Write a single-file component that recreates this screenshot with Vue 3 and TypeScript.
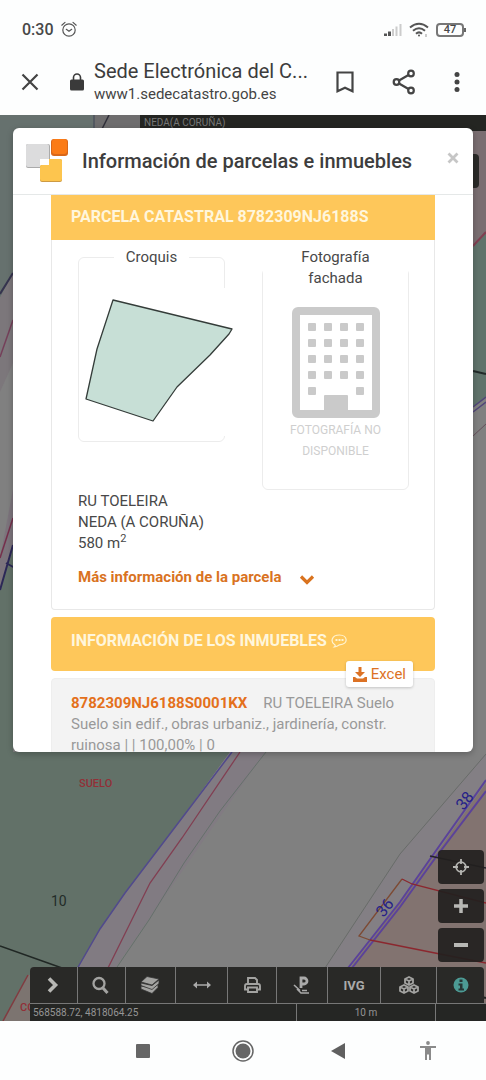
<script setup lang="ts">
interface Tool {
  id: string
  label: string
}

const tools: Tool[] = [
  { id: 'next', label: 'Desplegar' },
  { id: 'search', label: 'Buscar' },
  { id: 'layers', label: 'Capas' },
  { id: 'measure', label: 'Medir' },
  { id: 'print', label: 'Imprimir' },
  { id: 'ponencia', label: 'Ponencias' },
  { id: 'ivg', label: 'IVG' },
  { id: 'cubes', label: 'Edificios 3D' },
  { id: 'info', label: 'Información' },
]

const windows: { x: number; y: number }[] = []
for (let row = 0; row < 5; row++) {
  for (let col = 0; col < 4; col++) {
    if (row === 4 && (col === 1 || col === 2)) continue
    windows.push({ x: 16 + col * 16, y: 16 + row * 16 })
  }
}
</script>

<template>
  <div class="phone">
    <header class="chrome">
      <div class="status">
        <span class="clock">0:30</span>
        <svg class="alarm" width="18" height="18" viewBox="0 0 18 18" fill="none" stroke="#555" stroke-width="1.2" stroke-linecap="round">
          <circle cx="9" cy="9" r="6.2" />
          <path d="M1.800 4.200 5 1.400M16.200 4.200 13 1.400M6.300 8.300 9 10.300l2.700-2" />
        </svg>
        <span class="spacer"></span>
        <svg width="20" height="14" viewBox="0 0 20 14">
          <path d="M1 10.500h3V13H1zM5 8.500h3V13H5z" fill="#555" />
          <path d="M9 6h2v7H9zM12.500 3.500h2V13h-2zM16.500 1h2v12h-2z" fill="#ccc" />
        </svg>
        <svg class="wifi" width="20" height="16" viewBox="0 0 20 16" fill="none" stroke="#555" stroke-width="2">
          <path d="M1 5.500Q10-2 19 5.500M4 8.800Q10 3.600 16 8.800M7 11.800Q10 9 13 11.800" />
          <circle cx="10" cy="13.500" r="1" fill="#555" stroke="none" />
          <path d="M17 12v3" stroke="#999" stroke-width="1" />
        </svg>
        <span class="battery">47</span>
      </div>
      <div class="toolbar">
        <button class="plain" aria-label="Cerrar pestaña">
          <svg width="18" height="18" viewBox="0 0 18 18"><path d="m1.500 1.500 15 15m0-15-15 15" stroke="#444" stroke-width="2.200" /></svg>
        </button>
        <svg class="lock" width="14" height="18" viewBox="0 0 14 18">
          <rect x="0" y="6.500" width="14" height="11" rx="1.500" fill="#3a3a3a" />
          <path d="M3.500 7V4.500a3.500 3.500 0 0 1 7 0V7" fill="none" stroke="#3a3a3a" stroke-width="1.600" />
        </svg>
        <div class="site">
          <div class="site-name">Sede Electrónica del C...</div>
          <div class="site-url">www1.sedecatastro.gob.es</div>
        </div>
        <button class="plain" aria-label="Guardar">
          <svg width="18" height="22" viewBox="0 0 18 22"><path d="M1.500 1.500h15v18.700L9 16.800l-7.500 3.400z" fill="none" stroke="#444" stroke-width="2.200" /></svg>
        </button>
        <button class="plain share" aria-label="Compartir">
          <svg width="24" height="26" viewBox="0 0 24 26" fill="none" stroke="#444" stroke-width="2.200">
            <circle cx="4.500" cy="13" r="2.800" /><circle cx="19" cy="4.500" r="2.800" /><circle cx="19" cy="21.500" r="2.800" />
            <path d="m7 11.500 9.500-5.500M7 14.500l9.500 5.500" />
          </svg>
        </button>
        <button class="plain" aria-label="Más opciones">
          <svg width="6" height="20" viewBox="0 0 6 20" fill="#444"><circle cx="3" cy="2.500" r="2.500" /><circle cx="3" cy="10" r="2.500" /><circle cx="3" cy="17.500" r="2.500" /></svg>
        </button>
      </div>
    </header>

    <main class="map">
      <svg class="map-canvas" viewBox="0 115 486 906" preserveAspectRatio="xMidYMid slice" fill="none">
        <rect y="115" width="486" height="906" fill="#808080" />
        <path d="M0 115h95v100L13 273 0 298z" fill="#66716e" />
        <path d="M95 115h46v15H95z" fill="#6e6d6e" />
        <path d="M94 115v14" stroke="#414354" /><path d="m109 115-7 14" stroke="#30303a" stroke-width="1.500" />
        <path d="M0 298 13 273v90L0 392z" fill="#7c777b" />
        <path d="m13 273-13 21" stroke="#35334e" stroke-width="2" />
        <path d="M13 320 0 357" stroke="#75405a" stroke-width="1.500" />
        <path d="M0 558v30l13-44v-55z" fill="#7c747c" />
        <path d="M13 518 0 558" stroke="#75304c" stroke-width="1.500" />
        <path d="M0 590 13 545V752H230L182 818 125 893 100 929 77 969 40 1021H0z" fill="#627168" />
        <path d="M13 545 0 590M6 563l9 5" stroke="#2c2857" stroke-width="2" />
        <path d="M473 130h13v102l-13 14z" fill="#7a6e71" />
        <path d="M473 246 486 232v165l-13 10z" fill="#60736b" />
        <path d="m473 246 13-14" stroke="#813f51" stroke-width="2" />
        <path d="m473 371 13 3" stroke="#222a29" stroke-width="2" />
        <path d="m473 407 13-10M473 412l13-10" stroke="#514679" stroke-width="1.500" />
        <path d="m473 436 13-12" stroke="#664f5b" />
        <path d="M230 752h35L115 968l-31 53H40L77 969l23-40 25-36 57-75z" fill="#817b82" />
        <path d="m28 975-25 46h40l34-52z" fill="#7c7470" />
        <path d="m232 752-50 66-57 75-25 36-23 40-30 52" stroke="#514a8c" stroke-width="1.500" />
        <path d="m240 752-58 86-32 45-43 87-18 51" stroke="#813f52" stroke-width="1.300" />
        <path d="M266 752 220 811l-36 52-35 57-34 50" stroke="#65706b" />
        <path d="m486 754-86 100-75 114-31 53h15l41-53 50-67 40-57 46-64z" fill="#837f84" />
        <path d="m486 754-86 100-75 114" stroke="#686c69" />
        <path d="M486 783 440 848l-40 55-50 65-41 53h177z" fill="#827370" />
        <path d="m486 780-46 65-40 57-52 66-40 53M486 791l-50 66-36 50-48 61" stroke="#5b429a" stroke-width="2" />
        <path d="m430 856 56 12" stroke="#24212a" stroke-width="1.500" />
        <path d="m402 879-43 57 11 4" stroke="#7d4a33" stroke-width="1.300" />
        <path d="m370 940 70 14 46 9M402 879l10 5 74 19" stroke="#8b272e" stroke-width="1.300" />
        <path d="m0 946 62 22 20 9" stroke="#202724" stroke-width="1.500" />
        <path d="m28 975-25 46" stroke="#813b40" stroke-width="1.500" />
        <path d="M360 968 486 998" stroke="#222" stroke-width="2" />
        <text x="79" y="787" class="map-red">SUELO</text>
        <text x="51" y="906" class="map-black">10</text>
        <text x="20" y="1011" class="map-red">CO</text>
        <text class="map-blue" transform="translate(469 804) rotate(-52)">38</text>
        <text class="map-blue" transform="translate(389 911) rotate(-52)">36</text>
      </svg>
      <div class="place">NEDA(A CORUÑA)</div>
      <div class="side-tab"></div>

      <section class="modal" role="dialog" aria-labelledby="modal-title">
        <header class="modal-head">
          <svg width="44" height="44" viewBox="0 0 44 44">
            <rect x="1" y="5" width="24" height="24" rx="2" fill="#aaa" /><rect x="1" y="5" width="23" height="23" rx="2" fill="#dcdcdd" />
            <path d="M15 20h9v7h-9z" fill="#fff" />
            <path d="M17 26h7v-6h11q2 0 2 2v19q0 2-2 2H17q-2 0-2-2V28q0-2 2-2z" fill="#cd9a43" />
            <path d="M17 26h7v-6h11q2 0 2 2v18q0 2-2 2H17q-2 0-2-2V28q0-2 2-2z" fill="#fdc54e" />
            <rect x="26" y="0" width="17" height="17" rx="3" fill="#d96718" /><rect x="27" y="0" width="15" height="15" rx="3" fill="#fb7b16" />
          </svg>
          <h1 id="modal-title">Información de parcelas e inmuebles</h1>
          <button class="plain close" aria-label="Cerrar">
            <svg width="12" height="12" viewBox="0 0 12 12"><path d="m1.500 1.500 9 9m0-9-9 9" stroke="#c6c6c6" stroke-width="2.800" /></svg>
          </button>
        </header>

        <div class="modal-body">
          <article class="parcel">
            <h2 class="band">PARCELA CATASTRAL 8782309NJ6188S</h2>
            <div class="parcel-body">
              <div class="pictures">
                <fieldset class="frame sketch">
                  <legend>Croquis</legend>
                  <svg width="162" height="148" viewBox="79 288 162 148">
                    <path d="M81 288h160v148H81z" fill="#fff" />
                    <path d="m113 300 119 29-3 5-19 21-33 32-24 34-67-22 11-50z" fill="#c7dfd6" stroke="#343c39" stroke-width="1.300" stroke-linejoin="round" />
                  </svg>
                </fieldset>
                <fieldset class="frame photo">
                  <legend>Fotografía fachada</legend>
                  <svg width="88" height="112" viewBox="0 0 88 112">
                    <rect x="4" y="4" width="80" height="103" rx="2" fill="#fff" stroke="#cacaca" stroke-width="8" />
                    <rect v-for="(w, i) in windows" :key="i" :x="w.x" :y="w.y" width="8" height="8" rx="1" fill="#cacaca" />
                    <rect x="32" y="88" width="24" height="20" rx="1" fill="#cacaca" />
                  </svg>
                  <p>FOTOGRAFÍA NO DISPONIBLE</p>
                </fieldset>
              </div>
              <address>RU TOELEIRA<br />NEDA (A CORUÑA)<br />580 m<sup>2</sup></address>
              <a class="details" href="#parcela">
                Más información de la parcela
                <svg width="16" height="12" viewBox="0 0 16 12"><path d="m2 2.500 6 6 6-6" fill="none" stroke="#d9731f" stroke-width="3.200" /></svg>
              </a>
            </div>
          </article>

          <div class="estates-band">
            <h2 class="band">
              INFORMACIÓN DE LOS INMUEBLES
              <svg width="17" height="14" viewBox="0 0 17 14" fill="none" stroke="#fff3d0" stroke-width="1.200">
                <path d="M3.500 10.500C-.5 8 .3 1 8.500 1s9.500 9.500 0 9.800q-2.500 2-5 2 1.500-1 0-2.300z" />
                <path d="M4.500 6h2m1 0h2m1 0h2" stroke-width="1.800" />
              </svg>
            </h2>
            <button class="excel">
              <svg width="14" height="15" viewBox="0 0 14 15" fill="#dc7225"><path d="M5.500 0h3v5H12L7 10 2 5h3.500zM0 10h2l2 1.500h6l2-1.500h2v5H0z" /></svg>
              Excel
            </button>
          </div>

          <article class="estate">
            <a href="#inmueble">8782309NJ6188S0001KX</a>
            <span>RU TOELEIRA Suelo</span><br />
            Suelo sin edif., obras urbaniz., jardinería, constr. ruinosa | | 100,00% | 0
          </article>
        </div>
      </section>

      <div class="zoom-tools">
        <button class="dark" aria-label="Mi posición">
          <svg width="16" height="16" viewBox="0 0 16 16" fill="none" stroke="#b5b5b2" stroke-width="1.800"><circle cx="8" cy="8" r="4.800" /><path d="M8 0v5M8 11v5M0 8h5M11 8h5" /></svg>
        </button>
        <button class="dark" aria-label="Acercar">
          <svg width="14" height="14" viewBox="0 0 14 14"><path d="M7 0v14M0 7h14" stroke="#b8b8b5" stroke-width="3.500" /></svg>
        </button>
        <button class="dark" aria-label="Alejar">
          <svg width="14" height="14" viewBox="0 0 14 14"><path d="M0 7h14" stroke="#b8b8b5" stroke-width="4" /></svg>
        </button>
      </div>

      <footer class="map-foot">
        <nav class="tools">
          <button v-for="tool in tools" :key="tool.id" :aria-label="tool.label">
            <svg v-if="tool.id === 'next'" width="14" height="18" viewBox="0 0 14 18"><path d="m3 2.500 6.500 6.500L3 15.500" fill="none" stroke="#b8b8b5" stroke-width="3.600" /></svg>
            <svg v-else-if="tool.id === 'search'" width="18" height="18" viewBox="0 0 18 18" fill="none" stroke="#a3a3a1"><circle cx="7" cy="7.500" r="5.500" stroke-width="2.300" /><path d="m11 12 4.500 5" stroke-width="3" /></svg>
            <svg v-else-if="tool.id === 'layers'" width="20" height="18" viewBox="0 0 20 18" fill="#a3a3a1" stroke="#333" stroke-width="0.800">
              <path d="m1 13 11 4.500 6-6v-3L12 12 1 10z" /><path d="m1 9.500 11 4 7-6V4l-7 5.500L1 7z" /><path d="m1 6 6-5.500L19 3l-7 6z" />
            </svg>
            <svg v-else-if="tool.id === 'measure'" width="18" height="10" viewBox="0 0 18 10"><path d="M4 5h10" stroke="#aaa" stroke-width="1.600" /><path d="m0 5 4-3.500v7zM18 5l-4-3.500v7z" fill="#aaa" /></svg>
            <svg v-else-if="tool.id === 'print'" width="17" height="16" viewBox="0 0 17 16" fill="none" stroke="#a3a3a1" stroke-width="1.900"><path d="M4 7V1h7l2 2v4M3.500 12.500H1V9q0-2 2-2h11q2 0 2 2v3.500h-2.500" /><path d="M4 10.500h9V15H4z" /></svg>
            <svg v-else-if="tool.id === 'ponencia'" width="18" height="20" viewBox="0 0 18 20" fill="none" stroke="#aaa"><path d="M8 13V3h3a3 3 0 0 1 0 6H8" stroke-width="2.800" /><path d="M1 10l6 5.500M4 14l4 4h8M9 15.500h5" stroke-width="1.600" /></svg>
            <span v-else-if="tool.id === 'ivg'">IVG</span>
            <svg v-else-if="tool.id === 'cubes'" width="22" height="18" viewBox="0 0 22 18" fill="none" stroke="#a3a3a1" stroke-width="1.800" stroke-linejoin="round">
              <path d="m11 1 4 2v4l-4 2-4-2V3zM7 3l4 2 4-2M11 5v4" /><path d="m6 9 4 2v4l-4 2-4-2v-4zM2 11l4 2 4-2M6 13v4" /><path d="m16 9 4 2v4l-4 2-4-2v-4zM12 11l4 2 4-2M16 13v4" />
            </svg>
            <svg v-else width="16" height="16" viewBox="0 0 16 16"><circle cx="8" cy="8" r="7.500" fill="#4c9a94" /><path d="M6.500 2.500h3v2.500h-3zM5.500 6.500h4v5h1.500v2h-5.500v-2h1.500v-3H5.500z" fill="#263534" /></svg>
          </button>
        </nav>
        <div class="readout">
          <span>568588.72, 4818064.25</span>
          <span class="scale">10 m</span>
          <span></span>
        </div>
      </footer>
    </main>

    <nav class="system">
      <button class="plain" aria-label="Recientes"><svg width="14" height="14" viewBox="0 0 14 14"><rect width="14" height="14" rx="1" fill="#666" /></svg></button>
      <button class="plain" aria-label="Inicio"><svg width="22" height="22" viewBox="0 0 22 22"><circle cx="11" cy="11" r="10" fill="none" stroke="#666" stroke-width="1.500" /><circle cx="11" cy="11" r="7.500" fill="#666" /></svg></button>
      <button class="plain" aria-label="Atrás"><svg width="14" height="16" viewBox="0 0 14 16"><path d="M0 8 14 0v16z" fill="#606060" /></svg></button>
      <button class="plain" aria-label="Accesibilidad"><svg width="16" height="20" viewBox="0 0 16 20" fill="#8a8a8a"><circle cx="8" cy="2" r="1.900" /><path d="M0 5h16v2h-5v12H9v-5.500H7V19H5V7H0z" /></svg></button>
    </nav>
  </div>
</template>

<style>
body {
  margin: 0;
}
</style>

<style scoped>
.phone {
  display: flex;
  flex-direction: column;
  min-height: 100vh;
  background: #fdfefe;
  color: #484848;
  font: 15px/21px Roboto, "Liberation Sans", sans-serif;
}
.phone * {
  box-sizing: border-box;
}
svg {
  display: block;
  flex: none;
}
button {
  font: inherit;
  color: inherit;
  cursor: pointer;
}
.plain {
  display: flex;
  padding: 0;
  border: 0;
  background: none;
}
.chrome {
  height: 115px;
}
.status {
  display: flex;
  align-items: center;
  padding: 19px 22px 0 22px;
}
.clock {
  font-size: 16px;
  font-weight: 500;
}
.alarm {
  margin-left: 6px;
}
.spacer {
  flex: 1;
}
.wifi {
  margin: 0 7px 0 6px;
}
.battery {
  position: relative;
  width: 28px;
  height: 14px;
  border: 2px solid #777;
  border-radius: 4px;
  font-size: 11px;
  font-weight: 500;
  line-height: 10px;
  text-align: center;
}
.battery::after {
  content: "";
  position: absolute;
  top: 3px;
  right: -4px;
  width: 2px;
  height: 4px;
  background: #666;
}
.toolbar {
  display: flex;
  align-items: center;
  padding: 19px 26px 0 21px;
}
.lock {
  margin: 0 10px 0 31px;
}
.site {
  flex: 1;
  min-width: 0;
  white-space: nowrap;
}
.site-name {
  color: #3c3c3c;
  font-size: 20px;
  line-height: 24px;
}
.site-url {
  color: #444;
  line-height: 22px;
}
.share {
  margin: 0 38px;
}

.map {
  position: relative;
  display: flex;
  flex: 1;
  flex-direction: column;
  justify-content: flex-end;
  overflow: hidden;
}
.map-canvas {
  position: absolute;
  inset: 0;
  width: 100%;
  height: 100%;
}
.map-red {
  fill: #922f37;
  font-size: 11px;
  font-weight: 500;
}
.map-black {
  fill: #222c28;
  font-size: 14px;
}
.map-blue {
  fill: #252188;
  font-size: 16px;
  text-anchor: middle;
}
.place {
  position: absolute;
  top: 0;
  right: 0;
  left: 140px;
  height: 16px;
  padding-left: 4px;
  background: #242522;
  color: #777;
  font-size: 10px;
  line-height: 15px;
}
.side-tab {
  position: absolute;
  top: 39px;
  right: 7px;
  width: 20px;
  height: 34px;
  border-radius: 4px;
  background: #2a2a28;
}
.modal {
  position: absolute;
  inset: 13px 13px 269px;
  display: flex;
  flex-direction: column;
  overflow: hidden;
  border-radius: 6px;
  background: #fff;
  box-shadow: 0 2px 6px rgba(0, 0, 0, 0.25);
}
.modal-head {
  display: flex;
  flex: none;
  align-items: center;
  height: 67px;
  padding: 0 14px 0 12px;
  border-bottom: 1px solid #e5e8e8;
}
h1 {
  flex: 1;
  margin: 0 0 0 13px;
  color: #3d3d3d;
  font-size: 20px;
  font-weight: 500;
  line-height: 24px;
  white-space: nowrap;
}
.close {
  margin-top: -6px;
}
.modal-body {
  flex: 1;
  min-height: 0;
  padding: 0 38px;
  overflow-y: auto;
  scrollbar-width: none;
}
.parcel {
  border: 1px solid #e8e8e8;
  border-top: 0;
  border-radius: 0 0 4px 4px;
}
.band {
  display: flex;
  align-items: center;
  gap: 4px;
  margin: 0 -1px;
  padding: 11px 20px 13px;
  background: #fec75a;
  color: #fff6dc;
  font-size: 16px;
  font-weight: 700;
  line-height: 21px;
  white-space: nowrap;
}
.parcel-body {
  padding: 7px 25px 21px 26px;
}
.pictures {
  display: grid;
  grid-template-columns: 1fr 1fr;
  align-items: start;
  gap: 37px;
}
.frame {
  min-width: 0;
  margin: 0;
  padding: 0;
  border: 1px solid #ececec;
  border-radius: 6px;
}
legend {
  margin: 0 auto;
  padding: 0 12px;
  text-align: center;
}
.sketch {
  height: 195px;
}
.sketch svg {
  margin-top: 20px;
}
.photo {
  height: 243px;
}
.photo legend {
  padding: 0 28px;
}
.photo svg {
  margin: 18px auto 0;
}
.photo p {
  margin: 1px 20px 0;
  color: #cfcfcf;
  font-size: 12px;
  text-align: center;
}
address {
  margin-top: 1px;
  font-style: normal;
}
sup {
  font-size: 11px;
  line-height: 0;
}
.details {
  display: flex;
  align-items: center;
  gap: 18px;
  margin-top: 13px;
  color: #d9731f;
  font-weight: 700;
  text-decoration: none;
}
.details svg {
  margin-top: 4px;
}
.estates-band {
  position: relative;
  margin-top: 7px;
}
.estates-band .band {
  margin: 0;
  padding: 13px 20px 20px;
  border-radius: 4px;
}
.excel {
  position: absolute;
  right: 22px;
  bottom: -16px;
  display: flex;
  align-items: center;
  gap: 4px;
  height: 26px;
  padding: 0 7px;
  border: 0;
  border-radius: 3px;
  background: #fff;
  box-shadow: 0 1px 3px rgba(0, 0, 0, 0.2);
  color: #dc7225;
}
.estate {
  margin-top: 7px;
  padding: 14px 19px;
  border: 1px solid #eee;
  border-radius: 4px;
  background: #f3f3f3;
  color: #999;
}
.estate a {
  margin-right: 16px;
  color: #e4701b;
  font-weight: 700;
  text-decoration: none;
}
.zoom-tools {
  position: relative;
  display: flex;
  flex-direction: column;
  align-self: flex-end;
  gap: 5px;
  width: 46px;
  margin: 0 2px 5px 0;
}
.dark {
  display: grid;
  place-items: center;
  height: 34px;
  padding: 0;
  border: 0;
  border-radius: 4px;
  background: rgba(34, 32, 30, 0.92);
}
.map-foot {
  position: relative;
  margin-left: 30px;
}
.tools {
  display: grid;
  grid-template-columns: 47fr 47fr 50fr 51fr 48fr 50fr 53fr 55fr 47fr;
  gap: 1px;
  margin-right: 2px;
  overflow: hidden;
  border-radius: 4px 4px 0 0;
  background: #777;
}
.tools button {
  display: grid;
  place-items: center;
  height: 36px;
  min-width: 0;
  padding: 0;
  border: 0;
  background: #292927;
  color: #aaa;
  font-size: 13px;
  font-weight: 700;
}
.readout {
  display: grid;
  grid-template-columns: 266fr 140fr 50fr;
  border-top: 1px solid #777;
  background: #252624;
  color: #959595;
  font-size: 10px;
  line-height: 17px;
}
.readout span {
  padding-left: 3px;
}
.readout .scale {
  padding: 0;
  border: solid #777;
  border-width: 0 1px;
  text-align: center;
}
.system {
  display: grid;
  grid-template-columns: 101fr 100fr 90fr 90fr;
  align-items: center;
  height: 59px;
  padding: 0 13px 0 92px;
}
.system button {
  justify-self: center;
}
</style>
